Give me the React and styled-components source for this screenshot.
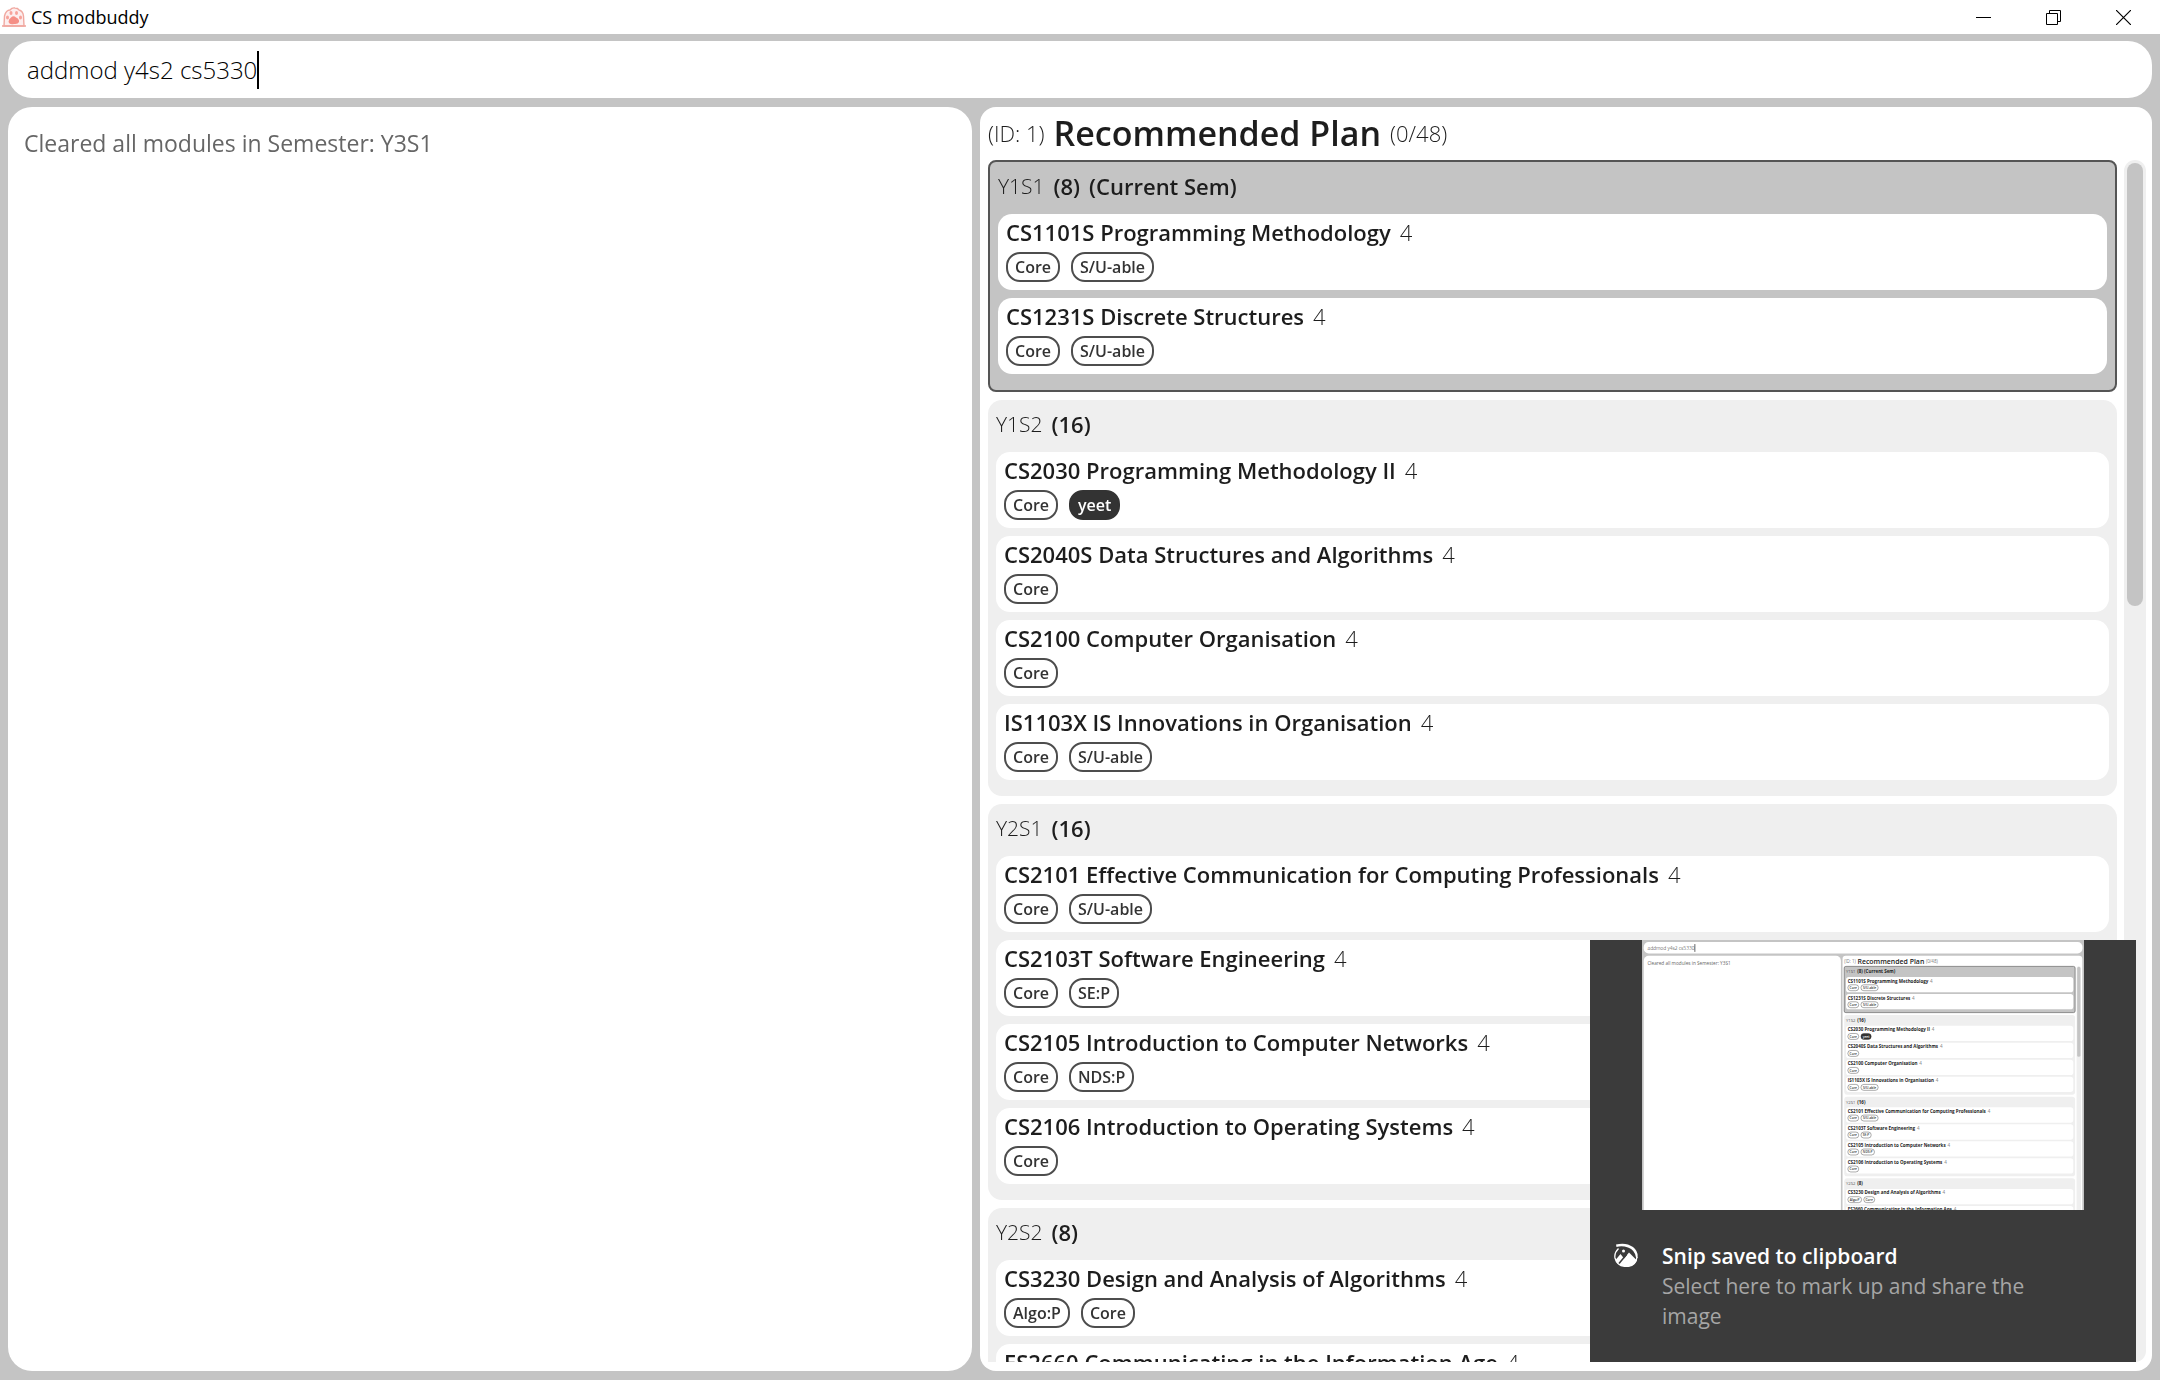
import React from "react";
import styled, { createGlobalStyle, css } from "styled-components";

const GlobalStyle = createGlobalStyle`
  *, *::before, *::after { box-sizing: border-box; }
  html, body, #root { height: 100%; }
  body {
    margin: 0;
    overflow: hidden;
    background: #c4c4c4;
    color: #1d1d1d;
    font-family: "Segoe UI", "Open Sans", "Noto Sans", sans-serif;
  }
`;

const plan = [
  {
    name: "Y1S1", credits: 8, current: true,
    modules: [
      { title: "CS1101S Programming Methodology", tags: ["Core", "S/U-able"] },
      { title: "CS1231S Discrete Structures", tags: ["Core", "S/U-able"] },
    ],
  },
  {
    name: "Y1S2", credits: 16,
    modules: [
      { title: "CS2030 Programming Methodology II", tags: ["Core", "yeet"] },
      { title: "CS2040S Data Structures and Algorithms", tags: ["Core"] },
      { title: "CS2100 Computer Organisation", tags: ["Core"] },
      { title: "IS1103X IS Innovations in Organisation", tags: ["Core", "S/U-able"] },
    ],
  },
  {
    name: "Y2S1", credits: 16,
    modules: [
      { title: "CS2101 Effective Communication for Computing Professionals", tags: ["Core", "S/U-able"] },
      { title: "CS2103T Software Engineering", tags: ["Core", "SE:P"] },
      { title: "CS2105 Introduction to Computer Networks", tags: ["Core", "NDS:P"] },
      { title: "CS2106 Introduction to Operating Systems", tags: ["Core"] },
    ],
  },
  {
    name: "Y2S2", credits: 8,
    modules: [
      { title: "CS3230 Design and Analysis of Algorithms", tags: ["Algo:P", "Core"] },
      { title: "ES2660 Communicating in the Information Age", tags: [] },
    ],
  },
];

const customTags = ["yeet"];

const Window = styled.div`
  display: flex;
  flex-direction: column;
  height: 100vh;
`;

const TitleBar = styled.header`
  display: flex;
  align-items: center;
  flex: none;
  height: 34px;
  padding: 0 2px;
  background: #fff;
  color: #000;
`;

const AppName = styled.h1`
  flex: 1;
  margin: 0 0 0 5px;
  font-size: 18px;
  font-weight: 400;
  line-height: 24px;
`;

const WindowButton = styled.button`
  display: grid;
  place-items: center;
  width: 70px;
  height: 34px;
  padding: 0;
  border: 0;
  background: none;
  color: #000;
`;

const Body = styled.main`
  display: flex;
  flex: 1;
  flex-direction: column;
  gap: 9px;
  min-height: 0;
  padding: 7px 8px 9px;
`;

const CommandBox = styled.label`
  display: flex;
  align-items: center;
  flex: none;
  height: 57px;
  padding: 0 19px;
  border-radius: 24px;
  background: #fff;
  cursor: text;
`;

const CommandInput = styled.input`
  field-sizing: content;
  min-width: 0;
  height: 36px;
  padding: 0;
  border: 0;
  outline: 0;
  background: none;
  color: #000;
  caret-color: transparent;
  font: 300 24px/36px "Segoe UI", "Open Sans", "Noto Sans", sans-serif;
`;

const Caret = styled.span`
  width: 2px;
  height: 38px;
  background: #000;
`;

const Columns = styled.div`
  display: grid;
  flex: 1;
  grid-template-columns: 964fr 1172fr;
  gap: 8px;
  min-height: 0;
`;

const ResultPanel = styled.section`
  padding: 18px 16px;
  border-radius: 24px;
  background: #fff;
  color: #666;
  font-size: 23px;
  line-height: 36px;

  p { margin: 0; }
`;

const PlanPanel = styled.section`
  display: flex;
  flex-direction: column;
  min-width: 0;
  min-height: 0;
  padding: 0 6px 9px 8px;
  border-radius: 16px;
  background: #fff;
`;

const PlanHeading = styled.div`
  display: flex;
  align-items: center;
  flex: none;
  gap: 9px;
  height: 53px;
  padding-bottom: 2px;
  font-size: 22px;
  font-weight: 300;

  h2 {
    margin: 0;
    font-size: 34px;
    font-weight: 600;
    line-height: 48px;
  }
`;

const PlanScroller = styled.div`
  display: flex;
  flex: 1;
  gap: 7px;
  min-height: 0;
`;

const SemesterList = styled.div`
  display: flex;
  flex: 1;
  flex-direction: column;
  gap: 8px;
  min-width: 0;
  overflow: hidden;
`;

const SemesterCard = styled.article`
  flex: none;
  padding: 0 8px 16px;
  border-radius: 14px;
  background: #efefef;

  ${({ $current }) => $current && css`
    border: 2px solid #555;
    border-radius: 8px;
    background: #c4c4c4;
  `}
`;

const SemesterHeading = styled.h3`
  display: flex;
  align-items: center;
  gap: 9px;
  height: 52px;
  margin: 0;
  padding-bottom: 4px;
  font-size: 22px;
  font-weight: 600;
`;

const SemesterName = styled.span`
  font-size: 21px;
  font-weight: 300;
`;

const Credits = styled.span`
  font-weight: 300;
`;

const ModuleList = styled.ul`
  display: flex;
  flex-direction: column;
  gap: 8px;
  margin: 0;
  padding: 0;
  list-style: none;
`;

const ModuleCard = styled.li`
  height: 76px;
  padding: 3px 8px 8px;
  border-radius: 14px;
  background: #fff;
`;

const ModuleTitle = styled.div`
  display: flex;
  gap: 9px;
  margin-bottom: 5px;
  font-size: 22px;
  font-weight: 600;
  line-height: 30px;
  white-space: nowrap;
`;

const TagRow = styled.div`
  display: flex;
  gap: 11px;
`;

const Tag = styled.span`
  height: 30px;
  padding: 0 7px;
  border: 2px solid ${({ $custom }) => ($custom ? "#333" : "#4d4d4d")};
  border-radius: 14px;
  background: ${({ $custom }) => ($custom ? "#333" : "#fff")};
  color: ${({ $custom }) => ($custom ? "#fff" : "#333")};
  font-size: 16px;
  font-weight: 600;
  line-height: 26px;
`;

const ScrollTrack = styled.div`
  flex: none;
  width: 22px;
  padding: 3px;
  border-radius: 11px;
  background: #efefef;
`;

const ScrollThumb = styled.div`
  height: 37%;
  border-radius: 8px;
  background: #c4c4c4;
`;

const Toast = styled.aside`
  position: fixed;
  right: 24px;
  bottom: 18px;
  width: 546px;
  height: 422px;
  background: #3b3b3b;
  color: #a6a6a6;
`;

const Thumbnail = styled.svg`
  display: block;
  width: 442px;
  height: 270px;
  margin: 0 auto;
  background: #c4c4c4;
`;

const ToastBody = styled.div`
  display: grid;
  grid-template-columns: 24px 1fr;
  gap: 24px;
  padding: 31px 72px 0 24px;
  font-size: 21px;
  line-height: 30px;

  p { margin: 0; }
  strong { display: block; color: #fff; font-weight: 600; }
  svg { margin-top: 2px; }
`;

const PawIcon = () => (
  <svg width="24" height="20" viewBox="0 0 24 20" aria-hidden="true">
    <path d="M2 19 2.500 9Q4 3 8 3 10 .5 13 1 16 1 17 3 21 4 21.500 9L22 19Z" fill="#fdeeee" stroke="#f0a8a0" strokeWidth="1.400" />
    <path d="M0 19h24" stroke="#f0a8a0" strokeWidth="1.600" />
    <path d="M6.500 15q0-3 2.500-4.500 2.500-2.500 5 0 3.500 1.500 3 4.500-1 2.500-5 2-4.500 1-5.500-2Z" fill="#f58f86" />
    <g fill="#f7a39b">
      <ellipse cx="5.500" cy="10.500" rx="1.500" ry="2" /><ellipse cx="9" cy="6" rx="1.500" ry="2" />
      <ellipse cx="14.500" cy="6" rx="1.500" ry="2" /><ellipse cx="18.500" cy="10.500" rx="1.500" ry="2" />
    </g>
  </svg>
);

const SnipIcon = () => (
  <svg width="24" height="24" viewBox="0 0 24 24" aria-hidden="true">
    <path d="M4.500 5.500Q0 10 1 15 3 23 12 23.500 22 23.500 23 14" fill="none" stroke="#fff" strokeWidth="1.300" />
    <path d="M2 1.500Q12-1 19 4 24.500 8.500 23.500 15L22 14.500Q21 7 14 4.500 8 2.500 2.500 4Z" fill="#fff" />
    <path d="M1.500 17 6.500 11l3.500 4.500L15 9.500l8 8Q20 23.500 12 23.500 4 23.500 1.500 17Z" fill="#fff" />
    <path d="m5 20.500 7.500-9" stroke="#3b3b3b" strokeWidth="1.500" />
    <circle cx="9.500" cy="8" r="1.500" fill="#fff" />
  </svg>
);

const previewTops = [129, 367, 766, 1165];
const previewTagWidths = { Core: 53, "S/U-able": 84, yeet: 50, "SE:P": 50, "NDS:P": 66, "Algo:P": 67 };

const PreviewTags = ({ tags, y }) => {
  let x = 1006;
  return tags.map((tag) => {
    const width = previewTagWidths[tag];
    const left = x;
    const custom = customTags.includes(tag);
    x += width + 11;
    return (
      <g key={tag}>
        <rect x={left} y={y} width={width} height="29" rx="14" fill={custom ? "#333" : "#fff"} stroke="#333" strokeWidth="2" />
        <text x={left + width / 2} y={y + 21} fontSize="16" fontWeight="600" textAnchor="middle" fill={custom ? "#fff" : "#333"}>{tag}</text>
      </g>
    );
  });
};

const Preview = () => (
  <Thumbnail viewBox="0 0 2160 1320" role="img" aria-label="Preview of the captured window" fill="#1d1d1d">
    <rect x="8" y="10" width="2145" height="56" rx="24" fill="#fff" />
    <text x="27" y="49" fontSize="24" fontWeight="300">addmod y4s2 cs5330</text>
    <path d="M258 20v38" stroke="#000" strokeWidth="3" />
    <rect x="8" y="77" width="964" height="1300" rx="24" fill="#fff" />
    <text x="26" y="121" fontSize="23" fill="#666">Cleared all modules in Semester: Y3S1</text>
    <rect x="980" y="77" width="1172" height="1300" rx="16" fill="#fff" />
    <text x="988" y="112" fontSize="22" fontWeight="300">(ID: 1)</text>
    <text x="1053" y="115" fontSize="34" fontWeight="600">Recommended Plan</text>
    <text x="1388" y="112" fontSize="22" fontWeight="300">(0/48)</text>
    <rect x="2124" y="128" width="22" height="1300" rx="11" fill="#efefef" />
    <rect x="2127" y="131" width="16" height="440" rx="8" fill="#c4c4c4" />
    {plan.map(({ name, credits, current, modules }, index) => (
      <g key={name} transform={`translate(0 ${previewTops[index]})`}>
        <rect
          x="988" width="1129" height={current ? 226 : 389} rx={current ? 8 : 14}
          fill={current ? "#c4c4c4" : "#efefef"} stroke={current ? "#555" : "none"} strokeWidth="3"
        />
        <text x="997" y="34" fontSize="21" fontWeight="300">{name}</text>
        <text x="1052" y="34" fontSize="22" fontWeight="700">{`(${credits})${current ? " (Current Sem)" : ""}`}</text>
        {modules.map(({ title, tags }, row) => (
          <g key={title} transform={`translate(0 ${52 + row * 83})`}>
            <rect x="997" width="1111" height="75" rx="14" fill="#fff" />
            <text x="1005" y="27" fontSize="22" fontWeight="700">
              {title}<tspan dx="9" fontWeight="300">4</tspan>
            </text>
            <PreviewTags tags={tags} y={38} />
          </g>
        ))}
      </g>
    ))}
  </Thumbnail>
);

export default function App() {
  return (
    <>
      <GlobalStyle />
      <Window>
        <TitleBar>
          <PawIcon />
          <AppName>CS modbuddy</AppName>
          <WindowButton aria-label="Minimize">
            <svg width="15" height="15" viewBox="0 0 15 15"><path d="M0 7.500h15" stroke="currentColor" /></svg>
          </WindowButton>
          <WindowButton aria-label="Restore">
            <svg width="15" height="15" viewBox="0 0 15 15" fill="none" stroke="currentColor">
              <path d="M.5 3.500h11v11H.5zM3.500 3.500v-3h11v11h-3" />
            </svg>
          </WindowButton>
          <WindowButton aria-label="Close">
            <svg width="15" height="15" viewBox="0 0 15 15"><path d="m0 0 15 15M15 0 0 15" stroke="currentColor" strokeWidth="1.200" /></svg>
          </WindowButton>
        </TitleBar>
        <Body>
          <CommandBox>
            <CommandInput aria-label="Command" defaultValue="addmod y4s2 cs5330" autoFocus spellCheck={false} />
            <Caret aria-hidden="true" />
          </CommandBox>
          <Columns>
            <ResultPanel>
              <p>Cleared all modules in Semester: Y3S1</p>
            </ResultPanel>
            <PlanPanel>
              <PlanHeading>
                <span>(ID: 1)</span>
                <h2>Recommended Plan</h2>
                <span>(0/48)</span>
              </PlanHeading>
              <PlanScroller>
                <SemesterList>
                  {plan.map(({ name, credits, current, modules }) => (
                    <SemesterCard key={name} $current={current}>
                      <SemesterHeading>
                        <SemesterName>{name}</SemesterName>
                        <span>({credits})</span>
                        {current && <span>(Current Sem)</span>}
                      </SemesterHeading>
                      <ModuleList>
                        {modules.map(({ title, tags }) => (
                          <ModuleCard key={title}>
                            <ModuleTitle>{title}<Credits>4</Credits></ModuleTitle>
                            <TagRow>
                              {tags.map((tag) => (
                                <Tag key={tag} $custom={customTags.includes(tag)}>{tag}</Tag>
                              ))}
                            </TagRow>
                          </ModuleCard>
                        ))}
                      </ModuleList>
                    </SemesterCard>
                  ))}
                </SemesterList>
                <ScrollTrack><ScrollThumb /></ScrollTrack>
              </PlanScroller>
            </PlanPanel>
          </Columns>
        </Body>
      </Window>
      <Toast role="status">
        <Preview />
        <ToastBody>
          <SnipIcon />
          <p>
            <strong>Snip saved to clipboard</strong>
            Select here to mark up and share the image
          </p>
        </ToastBody>
      </Toast>
    </>
  );
}
